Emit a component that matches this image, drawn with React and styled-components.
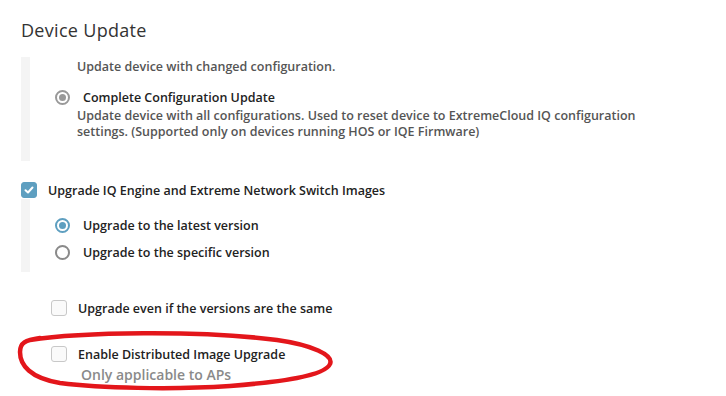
import React from "react";
import styled, { createGlobalStyle } from "styled-components";

const GlobalStyle = createGlobalStyle`
  body {
    margin: 0;
    background: #ffffff;
    font-family: "Open Sans", "Lato", sans-serif;
  }
`;

const Page = styled.div`
  position: relative;
  width: 726px;
  height: 396px;
  overflow: hidden;
  padding: 0 0 0 21px;
  box-sizing: border-box;
`;

const Title = styled.h2`
  margin: 0 0 19px;
  padding-top: 19px;
  height: 38px;
  box-sizing: border-box;
  font-size: 18px;
  line-height: 22px;
  font-weight: 400;
  letter-spacing: 0.3px;
  color: #333;
`;

const Panel = styled.div`
  border-left: 9px solid #f4f4f4;
  padding: ${(p) => p.$pad || "0"};
  padding-left: 25px;
  display: flex;
  flex-direction: column;
`;

const Desc = styled.div`
  color: #555;
  font-size: 12.5px;
  font-weight: 600;
  line-height: 16px;
  padding-left: ${(p) => p.$indent || 0}px;
  margin-top: ${(p) => p.$top || 0}px;
`;

const Row = styled.label`
  display: flex;
  align-items: center;
  height: ${(p) => p.$h || 20}px;
  margin-top: ${(p) => p.$top || 0}px;
  padding-left: ${(p) => p.$indent || 0}px;
  color: #222;
  font-size: 12.5px;
  font-weight: 600;
`;

const Radio = styled.span`
  width: 15px;
  height: 15px;
  border-radius: 50%;
  box-sizing: border-box;
  border: 2px solid ${(p) => (p.$color ? p.$color : "#8a8a8a")};
  display: flex;
  align-items: center;
  justify-content: center;
  margin-right: ${(p) => p.$gap || 13}px;
  flex-shrink: 0;
  &::after {
    content: "";
    width: 7px;
    height: 7px;
    border-radius: 50%;
    background: ${(p) => (p.$checked ? p.$color || "#999" : "transparent")};
  }
`;

const Box = styled.span`
  width: 16px;
  height: 16px;
  border-radius: 3px;
  box-sizing: border-box;
  border: 1px solid ${(p) => (p.$checked ? "#5e9fc0" : "#c8c8c8")};
  background: ${(p) => (p.$checked ? "#5e9fc0" : "#fafafa")};
  margin-right: ${(p) => p.$gap || 11}px;
  display: flex;
  align-items: center;
  justify-content: center;
  flex-shrink: 0;
`;

const Note = styled.div`
  color: #8a8a8a;
  font-size: 14px;
  font-weight: 600;
  padding-left: 60px;
  margin-top: 4px;
  line-height: 16px;
`;

const Scribble = styled.svg`
  position: absolute;
  left: 0;
  top: 0;
  pointer-events: none;
`;

export default function App() {
  return (
    <Page>
      <GlobalStyle />
      <Title>Device Update</Title>
      <Panel $pad="2px 0 21px">
        <Desc $indent={22}>Update device with changed configuration.</Desc>
        <Row $top={14} $h={16}>
          <Radio $checked $color="#999" $gap={13} />
          Complete Configuration Update
        </Row>
        <Desc $indent={22} $top={3}>
          Update device with all configurations. Used to reset device to ExtremeCloud IQ configuration
          <br />
          settings. (Supported only on devices running HOS or IQE Firmware)
        </Desc>
      </Panel>
      <Row $top={20} $h={18}>
        <Box $checked $gap={11}>
          <svg width="10" height="8" viewBox="0 0 10 8">
            <path d="M1.5 4.2 L4 6.5 L8.5 1.5" fill="none" stroke="#fff" strokeWidth="2" strokeLinecap="round" strokeLinejoin="round" />
          </svg>
        </Box>
        Upgrade IQ Engine and Extreme Network Switch Images
      </Row>
      <Panel $pad="16px 0 10px">
        <Row $h={20}>
          <Radio $checked $color="#5e9fc0" />
          Upgrade to the latest version
        </Row>
        <Row $h={20} $top={7}>
          <Radio />
          Upgrade to the specific version
        </Row>
      </Panel>
      <Row $indent={30} $top={27} $h={18}>
        <Box />
        Upgrade even if the versions are the same
      </Row>
      <Row $indent={30} $top={28} $h={18}>
        <Box />
        Enable Distributed Image Upgrade
      </Row>
      <Note>Only applicable to APs</Note>
      <Scribble width="726" height="396" viewBox="0 0 726 396">
        <path
          d="M30 340 C 80 332, 200 330, 277 340 C 312 345, 334 355, 330 364 C 325 376, 280 382, 230 386 C 170 390, 100 388, 60 383 C 30 378, 20 365, 20 352 C 20 343, 25 340, 40 338"
          fill="none"
          stroke="#e3161b"
          strokeWidth="4.5"
          strokeLinecap="round"
        />
      </Scribble>
    </Page>
  );
}
